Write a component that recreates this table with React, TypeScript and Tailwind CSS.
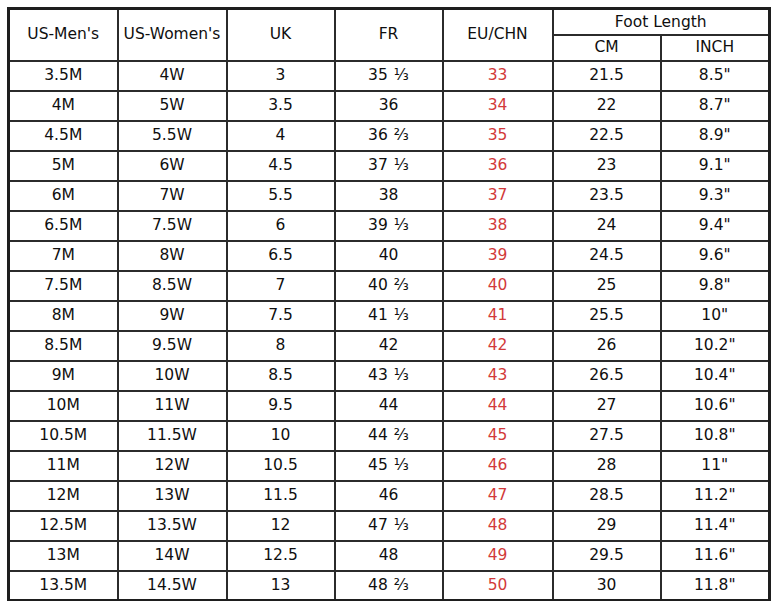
const ROWS: string[][] = [
  ["3.5M", "4W", "3", "35 ⅓", "33", "21.5", '8.5"'],
  ["4M", "5W", "3.5", "36", "34", "22", '8.7"'],
  ["4.5M", "5.5W", "4", "36 ⅔", "35", "22.5", '8.9"'],
  ["5M", "6W", "4.5", "37 ⅓", "36", "23", '9.1"'],
  ["6M", "7W", "5.5", "38", "37", "23.5", '9.3"'],
  ["6.5M", "7.5W", "6", "39 ⅓", "38", "24", '9.4"'],
  ["7M", "8W", "6.5", "40", "39", "24.5", '9.6"'],
  ["7.5M", "8.5W", "7", "40 ⅔", "40", "25", '9.8"'],
  ["8M", "9W", "7.5", "41 ⅓", "41", "25.5", '10"'],
  ["8.5M", "9.5W", "8", "42", "42", "26", '10.2"'],
  ["9M", "10W", "8.5", "43 ⅓", "43", "26.5", '10.4"'],
  ["10M", "11W", "9.5", "44", "44", "27", '10.6"'],
  ["10.5M", "11.5W", "10", "44 ⅔", "45", "27.5", '10.8"'],
  ["11M", "12W", "10.5", "45 ⅓", "46", "28", '11"'],
  ["12M", "13W", "11.5", "46", "47", "28.5", '11.2"'],
  ["12.5M", "13.5W", "12", "47 ⅓", "48", "29", '11.4"'],
  ["13M", "14W", "12.5", "48", "49", "29.5", '11.6"'],
  ["13.5M", "14.5W", "13", "48 ⅔", "50", "30", '11.8"'],
]

const cell = "border-2 border-[#2b2b2b] text-center align-middle p-0"

export default function App() {
  return (
    <div className="bg-white w-[782px] h-[601px] pl-[7px] pt-[7px] text-[#0f0f0f] text-[15.5px] leading-none" style={{ fontFamily: '"DejaVu Sans", Verdana, sans-serif' }}>
      <table className="table-fixed border-collapse border-[3px] border-[#1e1e1e] w-[761px]">
        <colgroup>
          <col className="w-[109px]" />
          <col className="w-[109px]" />
          <col className="w-[108px]" />
          <col className="w-[108px]" />
          <col className="w-[110px]" />
          <col className="w-[108px]" />
          <col className="w-[109px]" />
        </colgroup>
        <thead>
          <tr className="h-[26px]">
            <th rowSpan={2} className={`${cell} font-normal`}>US-Men's</th>
            <th rowSpan={2} className={`${cell} font-normal`}>US-Women's</th>
            <th rowSpan={2} className={`${cell} font-normal`}>UK</th>
            <th rowSpan={2} className={`${cell} font-normal`}>FR</th>
            <th rowSpan={2} className={`${cell} font-normal`}>EU/CHN</th>
            <th colSpan={2} className={`${cell} font-normal pt-[2px]`}>Foot Length</th>
          </tr>
          <tr className="h-[26px]">
            <th className={`${cell} font-normal`}>CM</th>
            <th className={`${cell} font-normal`}>INCH</th>
          </tr>
        </thead>
        <tbody>
          {ROWS.map((r) => (
            <tr key={r[0]} className="h-[30px]">
              {r.map((v, i) => (
                <td key={i} className={`${cell} ${i === 4 ? "text-[#d23a3a]" : ""}`}>
                  {i === 3 && v.includes(" ") ? (
                    <>
                      {v.split(" ")[0]}
                      <span className="ml-[6px]">{v.split(" ")[1]}</span>
                    </>
                  ) : (
                    v
                  )}
                </td>
              ))}
            </tr>
          ))}
        </tbody>
      </table>
    </div>
  )
}
